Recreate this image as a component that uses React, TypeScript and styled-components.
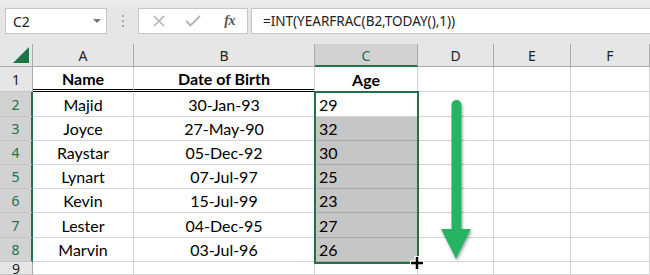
import React from "react"
import styled, { createGlobalStyle } from "styled-components"

const GlobalStyle = createGlobalStyle`
  html, body {
    margin: 0;
    padding: 0;
    background: #ffffff;
  }
  * {
    box-sizing: border-box;
  }
`

const GREEN = "#217346"
const UI_FONT = `"Noto Sans", "Open Sans", sans-serif`
const CELL_FONT = `Lato, "Noto Sans", sans-serif`

const Page = styled.div`
  position: relative;
  width: 650px;
  height: 275px;
  overflow: hidden;
  background: #ffffff;
`

const FormulaBar = styled.div`
  height: 44px;
  display: flex;
  align-items: flex-start;
  padding: 8px 0 0 5px;
  background: linear-gradient(#ececec, #e6e6e6 8px);
  font-family: ${UI_FONT};
`

const NameBox = styled.div`
  width: 102px;
  height: 26px;
  display: flex;
  align-items: center;
  justify-content: space-between;
  padding: 0 5px 0 7px;
  background: #ffffff;
  border: 1px solid #c6c6c6;
  font-size: 14px;
  color: #222;
`

const Caret = styled.span`
  width: 0;
  height: 0;
  border-left: 4px solid transparent;
  border-right: 4px solid transparent;
  border-top: 4px solid #777;
`

const Grip = styled.div`
  width: 31px;
  height: 26px;
  display: flex;
  flex-direction: column;
  align-items: center;
  justify-content: center;
  gap: 3px;
  span {
    width: 2px;
    height: 2px;
    background: #a6a6a6;
  }
`

const FxButtons = styled.div`
  width: 110px;
  height: 26px;
  display: flex;
  align-items: center;
  padding: 0 12px 0 14px;
  background: #ffffff;
  border: 1px solid #c6c6c6;
`

const FxIcon = styled.span`
  margin-left: auto;
  font-family: "Liberation Serif", serif;
  font-style: italic;
  font-weight: bold;
  font-size: 14px;
  color: #555;
  letter-spacing: -0.5px;
`

const FormulaInput = styled.div`
  flex: 1;
  height: 26px;
  margin-left: 3px;
  display: flex;
  align-items: center;
  padding-left: 11px;
  background: #ffffff;
  border: 1px solid #c6c6c6;
  border-right: none;
  font-size: 13.5px;
  color: #222;
  white-space: nowrap;
`

const Grid = styled.div`
  display: grid;
  grid-template-columns: 33px 101px 181px 103px 76px 77px 1fr;
  grid-template-rows: 23px 25px 25px 24px 24px 24px 24px 25px 24px 13px;
`

const ColHead = styled.div<{ $active?: boolean }>`
  display: flex;
  align-items: center;
  justify-content: center;
  background: ${(p) => (p.$active ? "#d2d2d2" : "#e6e6e6")};
  color: ${(p) => (p.$active ? GREEN : "#222")};
  border-right: 1px solid #ababab;
  border-bottom: ${(p) => (p.$active ? `2px solid ${GREEN}` : "1px solid #ababab")};
  font-family: ${UI_FONT};
  font-size: 14px;
  padding-top: 1px;
`

const Corner = styled.div`
  position: relative;
  background: #e6e6e6;
  border-right: 1px solid #ababab;
  border-bottom: 1px solid #ababab;
  &::after {
    content: "";
    position: absolute;
    right: 3px;
    bottom: 3px;
    width: 0;
    height: 0;
    border-left: 16px solid transparent;
    border-bottom: 16px solid ${GREEN};
  }
`

const RowHead = styled.div<{ $active?: boolean }>`
  display: flex;
  align-items: center;
  justify-content: center;
  background: ${(p) => (p.$active ? "#d2d2d2" : "#e6e6e6")};
  color: ${(p) => (p.$active ? GREEN : "#222")};
  border-right: ${(p) => (p.$active ? `2px solid ${GREEN}` : "1px solid #ababab")};
  border-bottom: 1px solid #c4c4c4;
  font-family: ${UI_FONT};
  font-size: 14px;
`

const Cell = styled.div<{ $align?: "left" | "center"; $bold?: boolean; $double?: boolean; $fill?: boolean }>`
  display: flex;
  align-items: center;
  justify-content: ${(p) => (p.$align === "left" ? "flex-start" : "center")};
  padding: 0 4px;
  background: ${(p) => (p.$fill ? "#c6c6c6" : "#ffffff")};
  border-right: 1px solid ${(p) => (p.$fill ? "#ffffff" : "#d4d4d4")};
  border-bottom: ${(p) => (p.$double ? "3px double #000" : `1px solid ${p.$fill ? "#a9a9a9" : "#d4d4d4"}`)};
  font-family: ${CELL_FONT};
  font-size: 16px;
  font-weight: ${(p) => (p.$bold ? 700 : 400)};
  color: #000;
  white-space: nowrap;
`

const Selection = styled.div`
  position: absolute;
  left: 314px;
  top: 91px;
  width: 105px;
  height: 173px;
  border: 2px solid ${GREEN};
  pointer-events: none;
`

const Overlay = styled.svg`
  position: absolute;
  left: 0;
  top: 0;
  pointer-events: none;
`

const rows = [
  { name: "Majid", dob: "30-Jan-93", age: "29" },
  { name: "Joyce", dob: "27-May-90", age: "32" },
  { name: "Raystar", dob: "05-Dec-92", age: "30" },
  { name: "Lynart", dob: "07-Jul-97", age: "25" },
  { name: "Kevin", dob: "15-Jul-99", age: "23" },
  { name: "Lester", dob: "04-Dec-95", age: "27" },
  { name: "Marvin", dob: "03-Jul-96", age: "26" },
]

const cols = ["A", "B", "C", "D", "E", "F"]

const App: React.FC = () => {
  return (
    <Page>
      <GlobalStyle />
      <FormulaBar>
        <NameBox>
          <span>C2</span>
          <Caret />
        </NameBox>
        <Grip>
          <span />
          <span />
          <span />
        </Grip>
        <FxButtons>
          <svg width="12" height="12" viewBox="0 0 12 12">
            <path d="M1 1 L11 11 M11 1 L1 11" stroke="#b4b4b4" strokeWidth="1.6" fill="none" />
          </svg>
          <svg width="16" height="12" viewBox="0 0 16 12" style={{ marginLeft: 20 }}>
            <path d="M1 6 L5.5 10.5 L15 1" stroke="#b4b4b4" strokeWidth="1.8" fill="none" />
          </svg>
          <FxIcon>fx</FxIcon>
        </FxButtons>
        <FormulaInput>=INT(YEARFRAC(B2,TODAY(),1))</FormulaInput>
      </FormulaBar>

      <Grid>
        <Corner />
        {cols.map((c) => (
          <ColHead key={c} $active={c === "C"}>
            {c}
          </ColHead>
        ))}

        <RowHead>1</RowHead>
        <Cell $bold $double>Name</Cell>
        <Cell $bold $double>Date of Birth</Cell>
        <Cell $bold>Age</Cell>
        <Cell />
        <Cell />
        <Cell />

        {rows.map((r, i) => (
          <React.Fragment key={r.name}>
            <RowHead $active>{i + 2}</RowHead>
            <Cell>{r.name}</Cell>
            <Cell>{r.dob}</Cell>
            <Cell $align="left" $fill={i > 0}>
              {r.age}
            </Cell>
            <Cell />
            <Cell />
            <Cell />
          </React.Fragment>
        ))}

        <RowHead>9</RowHead>
        <Cell />
        <Cell />
        <Cell />
        <Cell />
        <Cell />
        <Cell />
      </Grid>

      <Selection />

      <Overlay width="650" height="275" viewBox="0 0 650 275">
        <defs>
          <filter id="shadow" x="-30%" y="-10%" width="160%" height="130%">
            <feDropShadow dx="1" dy="2" stdDeviation="1.5" floodColor="#000" floodOpacity="0.35" />
          </filter>
        </defs>
        <g filter="url(#shadow)" fill="#27b363">
          <rect x="451.5" y="100" width="10" height="134" rx="5" />
          <polygon points="441,229 471,229 456,259" />
        </g>
        <g>
          <path d="M417 256 V270 M410 263 H424" stroke="#fff" strokeWidth="5" />
          <path d="M417 257 V269 M411 263 H423" stroke="#000" strokeWidth="2.5" />
        </g>
      </Overlay>
    </Page>
  )
}

export default App
